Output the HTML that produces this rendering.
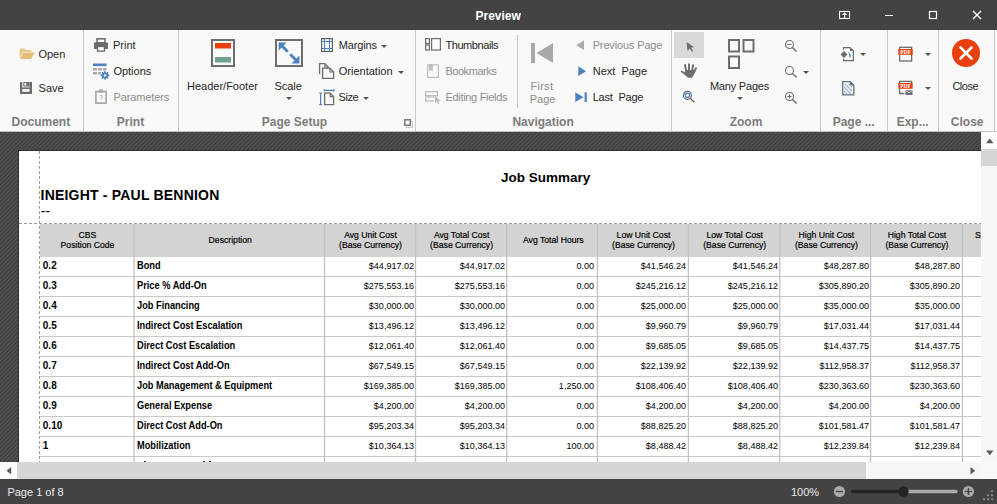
<!DOCTYPE html>
<html><head><meta charset="utf-8"><title>Preview</title>
<style>
html,body{margin:0;padding:0;width:997px;height:504px;overflow:hidden;background:#f9f9f9;}
body{position:relative;font-family:"Liberation Sans",sans-serif;}
.a{position:absolute;}
.t{position:absolute;white-space:pre;line-height:1;font-size:11px;color:#262626;}
.g{color:#8c8c8c;}
.th{position:absolute;white-space:pre;line-height:1;font-size:9.5px;color:#000;-webkit-text-stroke:0.2px #000;text-align:center;transform:scaleX(0.91);}
.tb{position:absolute;white-space:pre;line-height:1;font-size:10px;font-weight:bold;color:#000;transform-origin:left;}
.tbs{transform:scaleX(0.925);}
.tn{position:absolute;white-space:pre;line-height:1;font-size:9.5px;color:#000;text-align:right;transform-origin:right;transform:scaleX(0.95);}
.gl{position:absolute;white-space:pre;line-height:1;font-size:12px;font-weight:bold;color:#7b7b7b;top:115.6px;}
.sep{position:absolute;top:30px;width:1px;height:101px;background:#c9c9c9;}
svg{position:absolute;overflow:visible;}
#title{left:0;top:0;width:997px;height:30px;background:#434343;}
#ribbon{left:0;top:30px;width:997px;height:101px;background:#f9f9f9;}
#rbline{left:0;top:131px;width:997px;height:1px;background:#c4c4c4;}
#view{left:0;top:132px;width:981px;height:330px;overflow:hidden;
 background:repeating-linear-gradient(135deg,#535353 0px,#3d3d3d 1.5px,#535353 3.0px);}
#page{left:19px;top:19px;width:1000px;height:400px;background:#fff;}
#vscroll{left:981px;top:132px;width:16px;height:330px;background:#f7f7f7;}
#hscroll{left:0;top:462px;width:981px;height:17px;background:#f7f7f7;}
#corner{left:981px;top:462px;width:16px;height:17px;background:#f9f9f9;}
#status{left:0;top:479px;width:997px;height:25px;background:#434343;}
</style></head>
<body>
<div id="title" class="a"></div>
<div id="ribbon" class="a"></div>
<!-- title bar -->
<div class="t" style="left:475.5px;top:9.6px;font-size:12px;font-weight:bold;color:#fff;">Preview</div>
<svg style="left:838px;top:10px" width="14" height="10" viewBox="0 0 14 10"><rect x="1.5" y="1.5" width="10" height="7" fill="none" stroke="#fff" stroke-width="1.1"/><path d="M3.9 5L6.6 2.2L9.3 5Z" fill="#fff"/><rect x="6" y="4.5" width="1.2" height="4" fill="#fff"/></svg>
<div class="a" style="left:885px;top:15px;width:8px;height:1.4px;background:#fff"></div>
<svg style="left:928px;top:10px" width="10" height="10" viewBox="0 0 10 10"><rect x="1.5" y="1.5" width="7" height="7" fill="none" stroke="#fff" stroke-width="1.2"/></svg>
<svg style="left:972px;top:10px" width="10" height="10" viewBox="0 0 10 10"><path d="M1 1L9 9M9 1L1 9" stroke="#fff" stroke-width="1.4"/></svg>

<!-- separators -->
<div class="sep" style="left:83px"></div>
<div class="sep" style="left:178px"></div>
<div class="sep" style="left:415px"></div>
<div class="sep" style="left:671px"></div>
<div class="sep" style="left:820px"></div>
<div class="sep" style="left:887px"></div>
<div class="sep" style="left:938px"></div>
<div class="sep" style="left:994px"></div>
<div class="a" style="left:517px;top:35px;width:1px;height:73px;background:#c9c9c9"></div>

<!-- group labels -->
<div class="gl" style="left:11.5px">Document</div>
<div class="gl" style="left:116.8px">Print</div>
<div class="gl" style="left:261.8px">Page Setup</div>
<div class="gl" style="left:512.4px">Navigation</div>
<div class="gl" style="left:729.7px">Zoom</div>
<div class="gl" style="left:832.7px">Page ...</div>
<div class="gl" style="left:896.7px">Exp...</div>
<div class="gl" style="left:950.8px">Close</div>
<svg style="left:404px;top:119px" width="10" height="10" viewBox="0 0 10 10"><rect x="2.5" y="2.5" width="6" height="6" fill="none" stroke="#c8c8c8" stroke-width="1"/><rect x="0.75" y="0.75" width="5.5" height="5.5" fill="#f9f9f9" stroke="#7b7b7b" stroke-width="1.5"/></svg>

<!-- Document group -->
<svg style="left:19px;top:47px" width="16" height="13" viewBox="0 0 16 13"><path d="M0.5 1.5H5.5L6.8 3H12.5V5H4L0.5 11.5Z" fill="#e9c88f"/><path d="M4.3 5.6H15.5L12.2 12H1Z" fill="#e6bd74"/></svg>
<div class="t" style="left:38.4px;top:48.7px;">Open</div>
<svg style="left:20px;top:82px" width="12" height="12" viewBox="0 0 12 12"><g fill="#6b6b6b"><rect x="0" y="0" width="2.2" height="12"/><rect x="9.6" y="0" width="2.4" height="12"/><rect x="0" y="9.8" width="12" height="2.2"/><rect x="0" y="5.4" width="12" height="1.6"/><path d="M3.3 0H9.6V4.6H3.3Z M4.4 1V3.5H6.4V1Z" fill-rule="evenodd"/></g></svg>
<div class="t" style="left:38.6px;top:82.5px;">Save</div>

<!-- Print group -->
<svg style="left:93px;top:38px" width="16" height="14" viewBox="0 0 16 14"><rect x="4" y="0.8" width="8" height="4" fill="none" stroke="#6b6b6b" stroke-width="1.5"/><path d="M1 4.5H15V11H12V8H4V11H1Z" fill="#6b6b6b"/><rect x="4.5" y="8.5" width="7" height="4.6" fill="none" stroke="#6b6b6b" stroke-width="1.3"/></svg>
<div class="t" style="left:113px;top:39.7px;">Print</div>
<svg style="left:93px;top:63px" width="16" height="17" viewBox="0 0 16 17"><rect x="0" y="0.5" width="13.5" height="2.6" fill="#4d82bf"/><g fill="#a9a9a9"><rect x="0" y="5" width="4" height="2.5"/><rect x="5" y="5" width="4" height="2.5"/><rect x="10" y="5" width="3.5" height="2.5"/><rect x="0" y="9" width="4" height="2.5"/><rect x="5" y="9" width="3" height="2.5"/></g><circle cx="12" cy="12.4" r="4" fill="#f9f9f9"/><circle cx="12" cy="12.4" r="3" fill="#4d82bf"/><g stroke="#4d82bf" stroke-width="1.7"><path d="M12 8.2V16.6M7.8 12.4H16.2M9 9.4L15 15.4M15 9.4L9 15.4"/></g><circle cx="12" cy="12.4" r="1.2" fill="#f9f9f9"/></svg>
<div class="t" style="left:113.4px;top:65.7px;">Options</div>
<svg style="left:95px;top:89px" width="12" height="15" viewBox="0 0 12 15"><path d="M0.9 2.6H11.1V14.1H0.9Z" fill="none" stroke="#a9a9a9" stroke-width="1.7"/><rect x="3.8" y="0.5" width="4.4" height="3.2" fill="#a9a9a9"/><text x="6" y="11.3" font-size="6.5" font-family="Liberation Sans" fill="#8a8a8a" text-anchor="middle">?</text></svg>
<div class="t g" style="letter-spacing:-0.1px;left:113.4px;top:91.7px;">Parameters</div>

<!-- Page Setup group -->
<svg style="left:211px;top:39px" width="24" height="28" viewBox="0 0 24 28"><rect x="1" y="1" width="22" height="26" fill="none" stroke="#6d6d6d" stroke-width="2"/><rect x="4" y="4" width="16" height="5.5" fill="#e8400c"/><rect x="4" y="18" width="16" height="5.5" fill="#6fa38b"/></svg>
<div class="t" style="left:187px;top:81.3px;">Header/Footer</div>
<svg style="left:275px;top:39px" width="28" height="28" viewBox="0 0 28 28"><rect x="1" y="1" width="26" height="26" fill="none" stroke="#6d6d6d" stroke-width="2"/><path d="M7 7L12.8 12.8M15.2 15.2L21 21" stroke="#4d82bf" stroke-width="2.8"/><path d="M3.6 3.6H11.6L3.6 11.6Z M24.4 24.4H16.4L24.4 16.4Z" fill="#4d82bf"/></svg>
<div class="t" style="left:274.4px;top:81.3px;">Scale</div>
<svg style="left:286px;top:97px" width="7" height="4" viewBox="0 0 7 4"><path d="M0 0H6L3 3Z" fill="#555"/></svg>
<svg style="left:321px;top:38px" width="13" height="15" viewBox="0 0 13 15"><rect x="0.6" y="0.6" width="10.8" height="12.8" fill="#fff" stroke="#5e5e5e" stroke-width="1.2"/><path d="M3.5 1V13.5M8.5 1V13.5M1 3.5H11.5M1 10.5H11.5" stroke="#4d82bf" stroke-width="1.1"/></svg>
<div class="t" style="letter-spacing:-0.15px;left:338.8px;top:39.7px;">Margins</div>
<svg style="left:381px;top:44.5px" width="7" height="4" viewBox="0 0 7 4"><path d="M0 0H6L3 3Z" fill="#555"/></svg>
<svg style="left:318px;top:62px" width="17" height="18" viewBox="0 0 17 18"><path d="M1.6 12V1.6H6.8L10.2 5V6" fill="none" stroke="#6d6d6d" stroke-width="1.3"/><path d="M6.8 1.6V5H10.2" fill="none" stroke="#6d6d6d" stroke-width="1.1"/><path d="M4.6 16.4V6.2H11.8L15.6 10V16.4Z" fill="#f9f9f9" stroke="#6d6d6d" stroke-width="1.3"/><path d="M11.8 6.2V10H15.6" fill="none" stroke="#6d6d6d" stroke-width="1.1"/></svg>
<div class="t" style="left:338.8px;top:65.7px;">Orientation</div>
<svg style="left:398px;top:70.5px" width="7" height="4" viewBox="0 0 7 4"><path d="M0 0H6L3 3Z" fill="#555"/></svg>
<svg style="left:319px;top:89px" width="16" height="17" viewBox="0 0 16 17"><path d="M1.6 4V15.6M0.2 4H3M0.2 15.6H3" stroke="#4d82bf" stroke-width="1.2"/><path d="M5.4 1.3H14.8M5.4 0V2.6M14.8 0V2.6" stroke="#4d82bf" stroke-width="1.2"/><path d="M5.6 15.6V4.2H11.2L14.6 7.6V15.6Z" fill="none" stroke="#6d6d6d" stroke-width="1.3"/><path d="M11.2 4.2V7.6H14.6" fill="none" stroke="#6d6d6d" stroke-width="1.1"/></svg>
<div class="t" style="letter-spacing:-0.35px;left:338.4px;top:91.7px;">Size</div>
<svg style="left:363px;top:96.5px" width="7" height="4" viewBox="0 0 7 4"><path d="M0 0H6L3 3Z" fill="#555"/></svg>

<!-- Navigation group -->
<svg style="left:425px;top:38px" width="16" height="13" viewBox="0 0 16 13"><g fill="none" stroke="#6d6d6d" stroke-width="1.2"><rect x="0.6" y="0.6" width="3.8" height="5"/><rect x="0.6" y="7" width="3.8" height="5"/><rect x="6.6" y="0.6" width="8.8" height="11.4"/></g></svg>
<div class="t" style="letter-spacing:-0.42px;left:445.4px;top:39.7px;">Thumbnails</div>
<svg style="left:427px;top:64px" width="12" height="14" viewBox="0 0 12 14"><rect x="0.6" y="0.9" width="10.8" height="12.5" fill="none" stroke="#bdbdbd" stroke-width="1.2"/><path d="M2 0H5.8V7.5L3.9 6L2 7.5Z" fill="#bdbdbd"/></svg>
<div class="t g" style="letter-spacing:-0.45px;left:445.4px;top:65.7px;">Bookmarks</div>
<svg style="left:425px;top:91px" width="16" height="14" viewBox="0 0 16 14"><g fill="none" stroke="#bdbdbd" stroke-width="1.2"><path d="M0.6 0.6H12.4V4.6H0.6Z"/><path d="M0.6 5.8H9.6M0.6 5.8V9.8H9"/></g><path d="M10 4.6L15.8 10H13L14.4 12.6L13.2 13.2L11.8 10.6L10 12.4Z" fill="#bdbdbd"/></svg>
<div class="t g" style="letter-spacing:-0.3px;left:445.4px;top:91.7px;">Editing Fields</div>
<svg style="left:530px;top:43px" width="24" height="21" viewBox="0 0 24 21"><rect x="1" y="0" width="4" height="20" fill="#a9a9a9"/><path d="M23 0V20L6.5 10Z" fill="#a9a9a9"/></svg>
<div class="t g" style="letter-spacing:0.3px;left:530.4px;top:81.3px;">First</div>
<div class="t g" style="left:529.7px;top:93.7px;">Page</div>
<svg style="left:576px;top:40px" width="9" height="11" viewBox="0 0 9 11"><path d="M8 0.3V10L0.3 5.15Z" fill="#a9a9a9"/></svg>
<div class="t g" style="letter-spacing:-0.15px;left:592.7px;top:39.7px;">Previous Page</div>
<svg style="left:578px;top:66px" width="9" height="11" viewBox="0 0 9 11"><path d="M0.3 0.3V10L8 5.15Z" fill="#4d82bf"/></svg>
<div class="t" style="left:592.7px;top:65.7px;">Next  Page</div>
<svg style="left:574.5px;top:92px" width="13" height="11" viewBox="0 0 13 11"><path d="M0.3 0.3V10L8.5 5.15Z" fill="#4d82bf"/><rect x="9.6" y="0.3" width="2.2" height="9.7" fill="#4d82bf"/></svg>
<div class="t" style="letter-spacing:-0.2px;left:592.7px;top:91.7px;">Last  Page</div>

<!-- Zoom group -->
<div class="a" style="left:674px;top:32px;width:30px;height:26px;background:#d9d9d9"></div>
<svg style="left:685.5px;top:42px" width="9" height="10" viewBox="0 0 9 10"><path d="M0.5 0L8.3 5.2L5 5.6L7.3 9L6 9.7L3.8 6.4L1.5 8.7Z" fill="#6d6d6d"/></svg>
<svg style="left:680px;top:62px" width="18" height="17" viewBox="0 0 18 17"><g stroke="#6d6d6d" stroke-width="1.9" stroke-linecap="round" fill="none"><path d="M5 3L6.2 9"/><path d="M9 2.2V9"/><path d="M13 3.2L12.2 9"/><path d="M16 6.2L14 10.5"/><path d="M1.8 9.5L6 12.5"/></g><path d="M5.2 8H14.8L14.2 12L12.2 15.8H8L4.5 12.5Z" fill="#6d6d6d"/></svg>
<svg style="left:682px;top:89px" width="14" height="15" viewBox="0 0 14 15"><circle cx="5.4" cy="6.3" r="4" fill="#fff" stroke="#6d6d6d" stroke-width="1.2"/><circle cx="5.4" cy="6.3" r="2.2" fill="none" stroke="#4d82bf" stroke-width="1.3"/><path d="M8.3 9.2L12.3 13.2" stroke="#6d6d6d" stroke-width="1.5"/></svg>
<svg style="left:728px;top:39px" width="27" height="31" viewBox="0 0 27 31"><g fill="none" stroke="#6d6d6d" stroke-width="2"><rect x="1" y="1" width="10" height="11.5"/><rect x="15.5" y="1" width="10" height="11.5"/><rect x="1" y="17.5" width="10" height="11.5"/></g></svg>
<div class="t" style="letter-spacing:-0.2px;left:709.9px;top:81.3px;">Many Pages</div>
<svg style="left:736.5px;top:97px" width="7" height="4" viewBox="0 0 7 4"><path d="M0 0H6L3 3Z" fill="#555"/></svg>
<svg style="left:785px;top:40px" width="13" height="12" viewBox="0 0 13 12"><circle cx="4.5" cy="4.5" r="4" fill="none" stroke="#6d6d6d" stroke-width="1.1"/><path d="M2.4 4.5H6.6" stroke="#6d6d6d" stroke-width="1.1"/><path d="M7.4 7.4L11.6 11.6" stroke="#6d6d6d" stroke-width="1.4"/></svg>
<svg style="left:785px;top:66px" width="13" height="12" viewBox="0 0 13 12"><circle cx="4.5" cy="4.5" r="4" fill="none" stroke="#6d6d6d" stroke-width="1.1"/><path d="M7.4 7.4L11.6 11.6" stroke="#6d6d6d" stroke-width="1.4"/></svg>
<svg style="left:803px;top:70.5px" width="7" height="4" viewBox="0 0 7 4"><path d="M0 0H6L3 3Z" fill="#555"/></svg>
<svg style="left:785px;top:92px" width="13" height="12" viewBox="0 0 13 12"><circle cx="4.5" cy="4.5" r="4" fill="none" stroke="#6d6d6d" stroke-width="1.1"/><path d="M2.4 4.5H6.6M4.5 2.4V6.6" stroke="#6d6d6d" stroke-width="1.1"/><path d="M7.4 7.4L11.6 11.6" stroke="#6d6d6d" stroke-width="1.4"/></svg>

<!-- Page background group -->
<svg style="left:840px;top:46px" width="15" height="16" viewBox="0 0 15 16"><path d="M3.6 3.5V1.6H10L13.4 5V14.6H3.6V12.8" fill="none" stroke="#6d6d6d" stroke-width="1.2"/><path d="M10 1.2L13.8 5H10Z" fill="#6d6d6d"/><path d="M0.5 8.4L4 4.9L7.5 8.4L4 11.9Z" fill="#6d6d6d"/><path d="M8 6.3C10 6.8 11 8.5 10.8 11.3C9.5 11.5 9 10.5 9.2 9.2C9.3 8.2 8.7 7.3 8 6.3Z" fill="#4d82bf"/></svg>
<svg style="left:860px;top:53px" width="7" height="4" viewBox="0 0 7 4"><path d="M0 0H6L3 3Z" fill="#555"/></svg>
<svg style="left:842px;top:81px" width="13" height="15" viewBox="0 0 13 15"><defs><clipPath id="wmc"><rect x="2" y="2.6" width="8" height="10.4"/></clipPath></defs><path d="M0.7 0.7H8.3L11.8 4.2V13.8H0.7Z" fill="#fff" stroke="#6d6d6d" stroke-width="1.3"/><path d="M8 0.3L12.2 4.5H8Z" fill="#6d6d6d"/><g clip-path="url(#wmc)" stroke="#9ab8dc" stroke-width="1.4"><path d="M-4 0L12 16M-1 -1L15 15M2 -2L18 14M-7 1L9 17M-10 2L6 18"/></g></svg>

<!-- Export group -->
<svg style="left:897.5px;top:46px" width="15" height="16" viewBox="0 0 15 16"><rect x="1.6" y="1.3" width="12" height="13.7" fill="none" stroke="#6d6d6d" stroke-width="1.3"/><rect x="0.3" y="3" width="14.4" height="5.8" fill="#e8400c"/><text x="7.5" y="7.9" font-size="5.4" font-weight="bold" font-family="Liberation Serif" fill="#fff" text-anchor="middle">PDF</text></svg>
<svg style="left:925px;top:53px" width="7" height="4" viewBox="0 0 7 4"><path d="M0 0H6L3 3Z" fill="#555"/></svg>
<svg style="left:897.5px;top:80px" width="15" height="16" viewBox="0 0 15 16"><path d="M1.6 9V13.5H6.5M1.6 3V1.3H13.6V3" fill="none" stroke="#6d6d6d" stroke-width="1.3"/><rect x="0.3" y="3" width="14.4" height="5.8" fill="#e8400c"/><text x="7.5" y="7.9" font-size="5.4" font-weight="bold" font-family="Liberation Serif" fill="#fff" text-anchor="middle">PDF</text><rect x="7.5" y="10.2" width="7" height="4.8" fill="#6d6d6d"/><path d="M7.5 10.4L11 12.8L14.5 10.4" fill="none" stroke="#f9f9f9" stroke-width="0.7"/></svg>
<svg style="left:925px;top:87px" width="7" height="4" viewBox="0 0 7 4"><path d="M0 0H6L3 3Z" fill="#555"/></svg>

<!-- Close group -->
<svg style="left:952px;top:39px" width="28" height="28" viewBox="0 0 28 28"><circle cx="14" cy="14" r="14" fill="#e8400c"/><path d="M8.5 8.5L19.5 19.5M19.5 8.5L8.5 19.5" stroke="#fff" stroke-width="2.6" stroke-linecap="round"/></svg>
<div class="t" style="letter-spacing:-0.5px;left:952.4px;top:80.8px;">Close</div>

<div id="rbline" class="a"></div>
<div id="view" class="a"><div id="pc" class="a" style="left:0;top:-132px;width:997px;height:504px">
<div class="a" style="left:18px;top:150px;width:1000px;height:400px;background:#2e2e2e"></div>
<div class="a" style="left:19px;top:151px;width:1000px;height:400px;background:#fff"></div>
<div class="t" style="left:501px;top:171.4px;font-size:13.5px;font-weight:bold;color:#000">Job Summary</div>
<div class="t" style="left:40.6px;top:188px;font-size:14px;font-weight:bold;color:#000;letter-spacing:0.2px">INEIGHT - PAUL BENNION</div>
<div class="t" style="left:40.8px;top:204px;font-size:14px;color:#000">--</div>
<svg style="left:0;top:0" width="997" height="504"><path d="M39.5 151V480" stroke="#9c9c9c" stroke-width="1" stroke-dasharray="3 2"/></svg>
<svg style="left:0;top:0" width="997" height="504"><path d="M19 223.5H990" stroke="#9c9c9c" stroke-width="1" stroke-dasharray="3 2"/></svg>
<div class="a" style="left:40px;top:224px;width:960px;height:33px;background:#d3d3d3"></div>
<svg style="left:0;top:0" width="997" height="504" viewBox="0 0 997 504"><path d="M40 276.5H1000" stroke="#c8c8c8" stroke-width="1"/><path d="M40 296.5H1000" stroke="#c8c8c8" stroke-width="1"/><path d="M40 316.5H1000" stroke="#c8c8c8" stroke-width="1"/><path d="M40 336.5H1000" stroke="#c8c8c8" stroke-width="1"/><path d="M40 356.5H1000" stroke="#c8c8c8" stroke-width="1"/><path d="M40 376.5H1000" stroke="#c8c8c8" stroke-width="1"/><path d="M40 396.5H1000" stroke="#c8c8c8" stroke-width="1"/><path d="M40 416.5H1000" stroke="#c8c8c8" stroke-width="1"/><path d="M40 436.5H1000" stroke="#c8c8c8" stroke-width="1"/><path d="M40 456.5H1000" stroke="#c8c8c8" stroke-width="1"/><path d="M134.0 224V480" stroke="#c2c2c2" stroke-width="1.3"/><path d="M324.5 224V480" stroke="#c2c2c2" stroke-width="1.3"/><path d="M415.5 224V480" stroke="#c2c2c2" stroke-width="1.3"/><path d="M506.7 224V480" stroke="#c2c2c2" stroke-width="1.3"/><path d="M597.4 224V480" stroke="#c2c2c2" stroke-width="1.3"/><path d="M688.4 224V480" stroke="#c2c2c2" stroke-width="1.3"/><path d="M779.8 224V480" stroke="#c2c2c2" stroke-width="1.3"/><path d="M870.6 224V480" stroke="#c2c2c2" stroke-width="1.3"/><path d="M962.4 224V480" stroke="#c2c2c2" stroke-width="1.3"/></svg>
<div class="th" style="left:39.8px;width:95.0px;top:230.1px">CBS</div>
<div class="th" style="left:39.8px;width:95.0px;top:240.1px">Position Code</div>
<div class="th" style="left:134.8px;width:190.5px;top:234.9px">Description</div>
<div class="th" style="left:325.3px;width:91.0px;top:230.1px">Avg Unit Cost</div>
<div class="th" style="left:325.3px;width:91.0px;top:240.1px">(Base Currency)</div>
<div class="th" style="left:416.3px;width:91.2px;top:230.1px">Avg Total Cost</div>
<div class="th" style="left:416.3px;width:91.2px;top:240.1px">(Base Currency)</div>
<div class="th" style="left:507.5px;width:90.7px;top:234.9px">Avg Total Hours</div>
<div class="th" style="left:598.2px;width:91.0px;top:230.1px">Low Unit Cost</div>
<div class="th" style="left:598.2px;width:91.0px;top:240.1px">(Base Currency)</div>
<div class="th" style="left:689.2px;width:91.4px;top:230.1px">Low Total Cost</div>
<div class="th" style="left:689.2px;width:91.4px;top:240.1px">(Base Currency)</div>
<div class="th" style="left:780.6px;width:90.8px;top:230.1px">High Unit Cost</div>
<div class="th" style="left:780.6px;width:90.8px;top:240.1px">(Base Currency)</div>
<div class="th" style="left:871.4px;width:91.8px;top:230.1px">High Total Cost</div>
<div class="th" style="left:871.4px;width:91.8px;top:240.1px">(Base Currency)</div>
<div class="th" style="left:975.3px;text-align:left;transform-origin:left;top:230.1px">Std Dev Unit Cost</div>
<div class="tb" style="left:42.8px;top:261.0px">0.2</div>
<div class="tb tbs" style="left:137px;top:261.0px">Bond</div>
<div class="tn" style="left:293.5px;width:120px;top:261.2px">$44,917.02</div>
<div class="tn" style="left:384.7px;width:120px;top:261.2px">$44,917.02</div>
<div class="tn" style="left:473.8px;width:120px;top:261.2px">0.00</div>
<div class="tn" style="left:566.4px;width:120px;top:261.2px">$41,546.24</div>
<div class="tn" style="left:657.8px;width:120px;top:261.2px">$41,546.24</div>
<div class="tn" style="left:748.6px;width:120px;top:261.2px">$48,287.80</div>
<div class="tn" style="left:840.4px;width:120px;top:261.2px">$48,287.80</div>
<div class="tb" style="left:42.8px;top:281.0px">0.3</div>
<div class="tb tbs" style="left:137px;top:281.0px">Price % Add-On</div>
<div class="tn" style="left:293.5px;width:120px;top:281.2px">$275,553.16</div>
<div class="tn" style="left:384.7px;width:120px;top:281.2px">$275,553.16</div>
<div class="tn" style="left:473.8px;width:120px;top:281.2px">0.00</div>
<div class="tn" style="left:566.4px;width:120px;top:281.2px">$245,216.12</div>
<div class="tn" style="left:657.8px;width:120px;top:281.2px">$245,216.12</div>
<div class="tn" style="left:748.6px;width:120px;top:281.2px">$305,890.20</div>
<div class="tn" style="left:840.4px;width:120px;top:281.2px">$305,890.20</div>
<div class="tb" style="left:42.8px;top:301.0px">0.4</div>
<div class="tb tbs" style="left:137px;top:301.0px">Job Financing</div>
<div class="tn" style="left:293.5px;width:120px;top:301.2px">$30,000.00</div>
<div class="tn" style="left:384.7px;width:120px;top:301.2px">$30,000.00</div>
<div class="tn" style="left:473.8px;width:120px;top:301.2px">0.00</div>
<div class="tn" style="left:566.4px;width:120px;top:301.2px">$25,000.00</div>
<div class="tn" style="left:657.8px;width:120px;top:301.2px">$25,000.00</div>
<div class="tn" style="left:748.6px;width:120px;top:301.2px">$35,000.00</div>
<div class="tn" style="left:840.4px;width:120px;top:301.2px">$35,000.00</div>
<div class="tb" style="left:42.8px;top:321.0px">0.5</div>
<div class="tb tbs" style="left:137px;top:321.0px">Indirect Cost Escalation</div>
<div class="tn" style="left:293.5px;width:120px;top:321.2px">$13,496.12</div>
<div class="tn" style="left:384.7px;width:120px;top:321.2px">$13,496.12</div>
<div class="tn" style="left:473.8px;width:120px;top:321.2px">0.00</div>
<div class="tn" style="left:566.4px;width:120px;top:321.2px">$9,960.79</div>
<div class="tn" style="left:657.8px;width:120px;top:321.2px">$9,960.79</div>
<div class="tn" style="left:748.6px;width:120px;top:321.2px">$17,031.44</div>
<div class="tn" style="left:840.4px;width:120px;top:321.2px">$17,031.44</div>
<div class="tb" style="left:42.8px;top:341.0px">0.6</div>
<div class="tb tbs" style="left:137px;top:341.0px">Direct Cost Escalation</div>
<div class="tn" style="left:293.5px;width:120px;top:341.2px">$12,061.40</div>
<div class="tn" style="left:384.7px;width:120px;top:341.2px">$12,061.40</div>
<div class="tn" style="left:473.8px;width:120px;top:341.2px">0.00</div>
<div class="tn" style="left:566.4px;width:120px;top:341.2px">$9,685.05</div>
<div class="tn" style="left:657.8px;width:120px;top:341.2px">$9,685.05</div>
<div class="tn" style="left:748.6px;width:120px;top:341.2px">$14,437.75</div>
<div class="tn" style="left:840.4px;width:120px;top:341.2px">$14,437.75</div>
<div class="tb" style="left:42.8px;top:361.0px">0.7</div>
<div class="tb tbs" style="left:137px;top:361.0px">Indirect Cost Add-On</div>
<div class="tn" style="left:293.5px;width:120px;top:361.2px">$67,549.15</div>
<div class="tn" style="left:384.7px;width:120px;top:361.2px">$67,549.15</div>
<div class="tn" style="left:473.8px;width:120px;top:361.2px">0.00</div>
<div class="tn" style="left:566.4px;width:120px;top:361.2px">$22,139.92</div>
<div class="tn" style="left:657.8px;width:120px;top:361.2px">$22,139.92</div>
<div class="tn" style="left:748.6px;width:120px;top:361.2px">$112,958.37</div>
<div class="tn" style="left:840.4px;width:120px;top:361.2px">$112,958.37</div>
<div class="tb" style="left:42.8px;top:381.0px">0.8</div>
<div class="tb tbs" style="left:137px;top:381.0px">Job Management &amp; Equipment</div>
<div class="tn" style="left:293.5px;width:120px;top:381.2px">$169,385.00</div>
<div class="tn" style="left:384.7px;width:120px;top:381.2px">$169,385.00</div>
<div class="tn" style="left:473.8px;width:120px;top:381.2px">1,250.00</div>
<div class="tn" style="left:566.4px;width:120px;top:381.2px">$108,406.40</div>
<div class="tn" style="left:657.8px;width:120px;top:381.2px">$108,406.40</div>
<div class="tn" style="left:748.6px;width:120px;top:381.2px">$230,363.60</div>
<div class="tn" style="left:840.4px;width:120px;top:381.2px">$230,363.60</div>
<div class="tb" style="left:42.8px;top:401.0px">0.9</div>
<div class="tb tbs" style="left:137px;top:401.0px">General Expense</div>
<div class="tn" style="left:293.5px;width:120px;top:401.2px">$4,200.00</div>
<div class="tn" style="left:384.7px;width:120px;top:401.2px">$4,200.00</div>
<div class="tn" style="left:473.8px;width:120px;top:401.2px">0.00</div>
<div class="tn" style="left:566.4px;width:120px;top:401.2px">$4,200.00</div>
<div class="tn" style="left:657.8px;width:120px;top:401.2px">$4,200.00</div>
<div class="tn" style="left:748.6px;width:120px;top:401.2px">$4,200.00</div>
<div class="tn" style="left:840.4px;width:120px;top:401.2px">$4,200.00</div>
<div class="tb" style="left:42.8px;top:421.0px">0.10</div>
<div class="tb tbs" style="left:137px;top:421.0px">Direct Cost Add-On</div>
<div class="tn" style="left:293.5px;width:120px;top:421.2px">$95,203.34</div>
<div class="tn" style="left:384.7px;width:120px;top:421.2px">$95,203.34</div>
<div class="tn" style="left:473.8px;width:120px;top:421.2px">0.00</div>
<div class="tn" style="left:566.4px;width:120px;top:421.2px">$88,825.20</div>
<div class="tn" style="left:657.8px;width:120px;top:421.2px">$88,825.20</div>
<div class="tn" style="left:748.6px;width:120px;top:421.2px">$101,581.47</div>
<div class="tn" style="left:840.4px;width:120px;top:421.2px">$101,581.47</div>
<div class="tb" style="left:42.8px;top:441.0px">1</div>
<div class="tb tbs" style="left:137px;top:441.0px">Mobilization</div>
<div class="tn" style="left:293.5px;width:120px;top:441.2px">$10,364.13</div>
<div class="tn" style="left:384.7px;width:120px;top:441.2px">$10,364.13</div>
<div class="tn" style="left:473.8px;width:120px;top:441.2px">100.00</div>
<div class="tn" style="left:566.4px;width:120px;top:441.2px">$8,488.42</div>
<div class="tn" style="left:657.8px;width:120px;top:441.2px">$8,488.42</div>
<div class="tn" style="left:748.6px;width:120px;top:441.2px">$12,239.84</div>
<div class="tn" style="left:840.4px;width:120px;top:441.2px">$12,239.84</div>
<div class="a" style="left:144px;top:461px;width:2px;height:1px;background:#333"></div><div class="a" style="left:203px;top:461px;width:2px;height:1px;background:#333"></div><div class="a" style="left:209px;top:461px;width:2px;height:1px;background:#333"></div>
</div></div>
<div id="vscroll" class="a"></div>
<div class="a" style="left:981px;top:132px;width:16px;height:17px;background:#fdfdfd"></div>
<svg style="left:985.5px;top:137.5px" width="8" height="6" viewBox="0 0 8 6"><path d="M0 5.2L3.75 0.5L7.5 5.2Z" fill="#5a5a5a"/></svg>
<div class="a" style="left:981px;top:149px;width:16px;height:17px;background:#d6d6d6"></div>
<svg style="left:985.5px;top:450px" width="8" height="6" viewBox="0 0 8 6"><path d="M0 0.5L3.75 5.2L7.5 0.5Z" fill="#5a5a5a"/></svg>
<div id="hscroll" class="a"></div>
<div class="a" style="left:0;top:462px;width:17px;height:17px;background:#fdfdfd"></div>
<svg style="left:6px;top:466.5px" width="6" height="8" viewBox="0 0 6 8"><path d="M5.2 0L0.5 3.75L5.2 7.5Z" fill="#5a5a5a"/></svg>
<div class="a" style="left:17px;top:462px;width:849px;height:17px;background:#d6d6d6"></div>
<svg style="left:970px;top:466.5px" width="6" height="8" viewBox="0 0 6 8"><path d="M0.5 0L5.2 3.75L0.5 7.5Z" fill="#5a5a5a"/></svg>
<div id="corner" class="a"></div>
<div id="status" class="a"></div>
<div class="t" style="left:7.4px;top:486.6px;color:#ececec">Page 1 of 8</div>
<div class="t" style="left:791px;top:486.6px;color:#ececec">100%</div>
<svg style="left:0;top:0" width="997" height="504" viewBox="0 0 997 504">
<circle cx="839.5" cy="491.5" r="5.6" fill="#aaaaaa"/><rect x="836" y="490.8" width="7" height="1.4" fill="#434343"/>
<path d="M852.5 491.5H903.5" stroke="#242424" stroke-width="3.4" stroke-linecap="round"/>
<path d="M903.5 491.5H956" stroke="#aaaaaa" stroke-width="3.4" stroke-linecap="round"/>
<circle cx="903.5" cy="491.5" r="5.2" fill="#242424"/>
<circle cx="968.4" cy="491.5" r="5.6" fill="#aaaaaa"/><rect x="964.9" y="490.8" width="7" height="1.4" fill="#434343"/><rect x="967.7" y="488" width="1.4" height="7" fill="#434343"/>
<g fill="#9e9e9e"><rect x="983.2" y="498.4" width="1.7" height="1.7"/><rect x="987.3" y="498.4" width="1.7" height="1.7"/><rect x="991.2" y="498.4" width="1.7" height="1.7"/><rect x="987.3" y="494.5" width="1.7" height="1.7"/><rect x="991.2" y="494.5" width="1.7" height="1.7"/><rect x="991.2" y="490.3" width="1.7" height="1.7"/></g>
</svg>
</body></html>
